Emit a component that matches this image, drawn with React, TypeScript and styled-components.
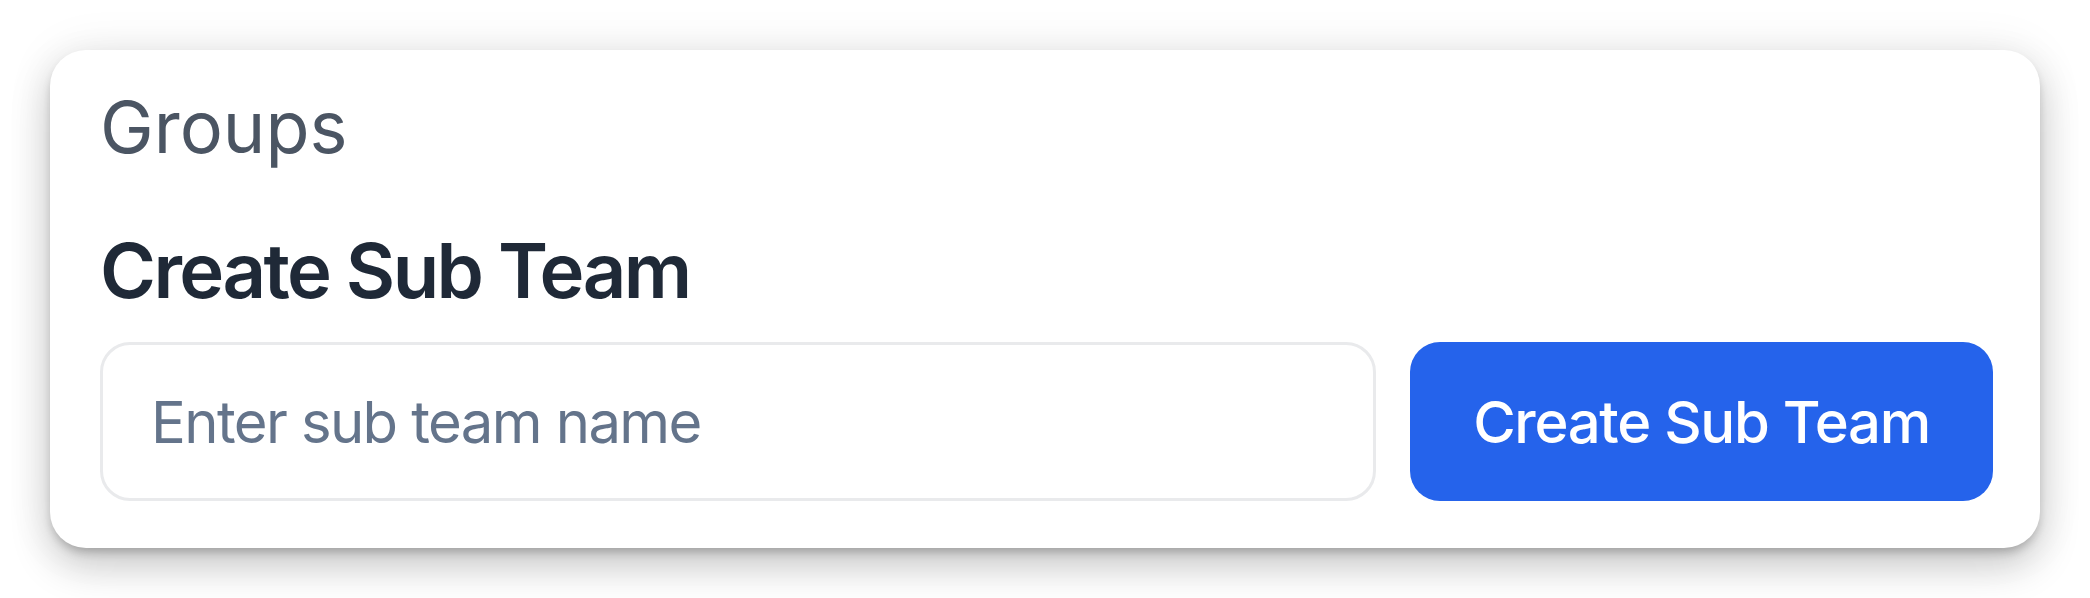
import styled, { createGlobalStyle } from 'styled-components';

const GlobalStyle = createGlobalStyle`
  html, body {
    margin: 0;
    padding: 0;
    background: #ffffff;
  }
  body {
    font-family: Inter, "Noto Sans", "Liberation Sans", sans-serif;
  }
`;

export default function App() {
  return (
    <>
      <GlobalStyle />
      <Page>
        <Card>
          <Title>Groups</Title>
          <Heading>Create Sub Team</Heading>
          <FormRow>
            <NameInput type="text" placeholder="Enter sub team name" />
            <CreateButton type="button">Create Sub Team</CreateButton>
          </FormRow>
        </Card>
      </Page>
    </>
  );
}

const Page = styled.div`
  box-sizing: border-box;
  min-height: 100vh;
  padding: 50px;
  background: #ffffff;
`;

const Card = styled.div`
  display: flex;
  flex-direction: column;
  background: #ffffff;
  border-radius: 36px;
  padding: 35px 47px 47px 50px;
  box-shadow:
    0 0 50px rgba(0, 0, 0, 0.07),
    0 18px 40px rgba(0, 0, 0, 0.2),
    0 6px 10px -2px rgba(0, 0, 0, 0.22);
`;

const Title = styled.h2`
  margin: 0;
  font-size: 72px;
  line-height: 84px;
  font-weight: 400;
  color: #4b5563;
`;

const Heading = styled.h3`
  margin: 56px 0 0 0;
  font-size: 76px;
  line-height: 90px;
  font-weight: 600;
  letter-spacing: -2.6px;
  color: #1f2937;
`;

const FormRow = styled.div`
  display: flex;
  align-items: stretch;
  gap: 34px;
  margin-top: 27px;
  height: 159px;
`;

const NameInput = styled.input`
  flex: 1;
  min-width: 0;
  box-sizing: border-box;
  border: 3px solid #e9eaec;
  border-radius: 30px;
  padding: 0 48px;
  font-family: Inter, "Noto Sans", "Liberation Sans", sans-serif;
  font-size: 58px;
  letter-spacing: -1.6px;
  color: #1f2937;
  background: #ffffff;
  outline: none;

  &::placeholder {
    color: #64748b;
  }
`;

const CreateButton = styled.button`
  box-sizing: border-box;
  width: 583px;
  border: none;
  border-radius: 30px;
  background: #2563eb;
  color: #ffffff;
  font-family: Inter, "Noto Sans", "Liberation Sans", sans-serif;
  font-size: 58px;
  font-weight: 500;
  letter-spacing: -1.3px;
  cursor: pointer;
`;
